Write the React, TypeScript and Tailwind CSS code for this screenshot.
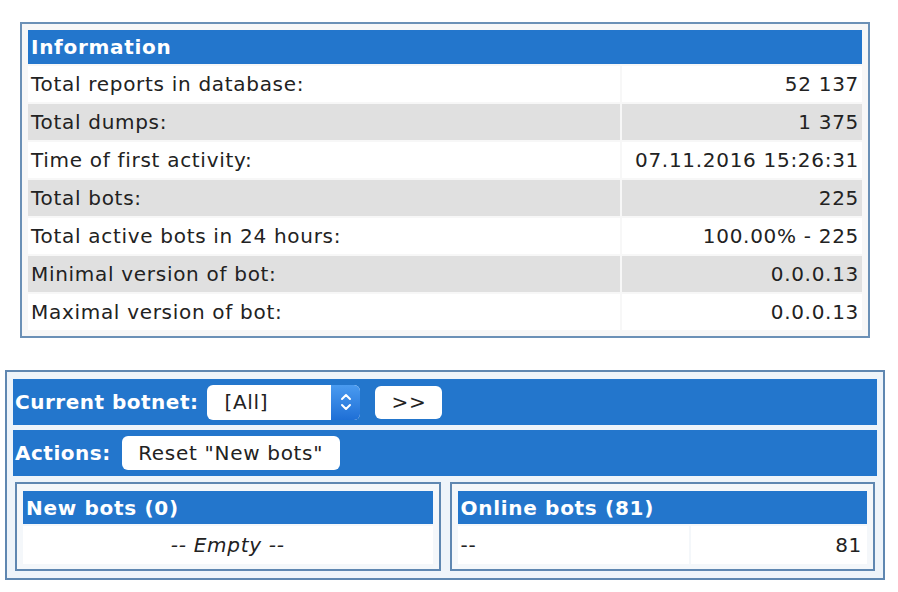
import React from 'react';

const rows: [string, string][] = [
  ['Total reports in database:', '52 137'],
  ['Total dumps:', '1 375'],
  ['Time of first activity:', '07.11.2016 15:26:31'],
  ['Total bots:', '225'],
  ['Total active bots in 24 hours:', '100.00% - 225'],
  ['Minimal version of bot:', '0.0.0.13'],
  ['Maximal version of bot:', '0.0.0.13'],
];

const font = { fontFamily: '"DejaVu Sans", Verdana, sans-serif' };

const SelectBox = () => (
  <div className="flex h-[35px] w-[153px] items-stretch overflow-hidden rounded-[6px] bg-white">
    <span className="flex flex-1 items-center pl-[17px] text-[#222]">[All]</span>
    <span className="flex w-[29px] items-center justify-center bg-gradient-to-b from-[#4a9bf0] to-[#1e6fd6]">
      <svg width="12" height="20" viewBox="0 0 12 20" fill="none" stroke="white" strokeWidth="2" strokeLinecap="round" strokeLinejoin="round">
        <path d="M2 7 L6 3 L10 7" />
        <path d="M2 13 L6 17 L10 13" />
      </svg>
    </span>
  </div>
);

const SubBox = ({ title, children }: { title: string; children: React.ReactNode }) => (
  <div className="flex flex-1 flex-col gap-[2px] border-2 border-[#5f87b1] bg-[#f4f7fa] px-[6px] pt-[7px] pb-[5px]">
    <div className="flex h-[33px] items-center bg-[#2376cc] px-[3px] font-bold text-white">{title}</div>
    {children}
  </div>
);

export default function App() {
  return (
    <div className="min-h-[592px] w-[898px] bg-white text-[20px] tracking-[0.7px] text-[#222]" style={font}>
      {/* Information table */}
      <div className="ml-[20px] pt-[22px]">
        <div className="w-[850px] border-2 border-[#6b90b6] bg-[#f7f7f7] p-[4px]">
          <table className="w-full border-separate border-spacing-[2px]">
            <thead>
              <tr>
                <th colSpan={2} className="h-[34px] bg-[#2376cc] px-[3px] text-left font-bold text-white">
                  Information
                </th>
              </tr>
            </thead>
            <tbody>
              {rows.map(([label, value], i) => (
                <tr key={label} className={i % 2 === 1 ? 'bg-[#e0e0e0]' : 'bg-white'}>
                  <td className="h-[36px] px-[3px] whitespace-nowrap">{label}</td>
                  <td className="w-[240px] px-[3px] text-right whitespace-nowrap">{value}</td>
                </tr>
              ))}
            </tbody>
          </table>
        </div>
      </div>

      {/* Botnet panel */}
      <div className="ml-[5px] mt-[32px] w-[880px] border-2 border-[#5f87b1] bg-[#eef4fa] px-[6px] py-[7px]">
        <div className="flex flex-col gap-[5px]">
          <div className="flex h-[46px] items-center bg-[#2376cc] px-[2px]">
            <span className="mr-[9px] font-bold tracking-[0.5px] text-white">Current botnet:</span>
            <SelectBox />
            <button className="ml-[15px] h-[33px] w-[67px] rounded-[6px] bg-white text-[#222]">&gt;&gt;</button>
          </div>
          <div className="flex h-[46px] items-center bg-[#2376cc] px-[2px]">
            <span className="mr-[11px] font-bold tracking-[0.5px] text-white">Actions:</span>
            <button className="h-[34px] w-[218px] rounded-[6px] bg-white text-[#222]">Reset "New bots"</button>
          </div>
          <div className="flex gap-[9px] px-[2px] pt-[1px]">
            <SubBox title="New bots (0)">
              <div className="flex h-[38px] items-center justify-center bg-white italic">-- Empty --</div>
            </SubBox>
            <SubBox title="Online bots (81)">
              <div className="flex h-[38px] gap-[2px]">
                <div className="flex w-[231px] items-center bg-white px-[3px]">--</div>
                <div className="flex flex-1 items-center justify-end bg-white px-[5px]">81</div>
              </div>
            </SubBox>
          </div>
        </div>
      </div>
    </div>
  );
}
